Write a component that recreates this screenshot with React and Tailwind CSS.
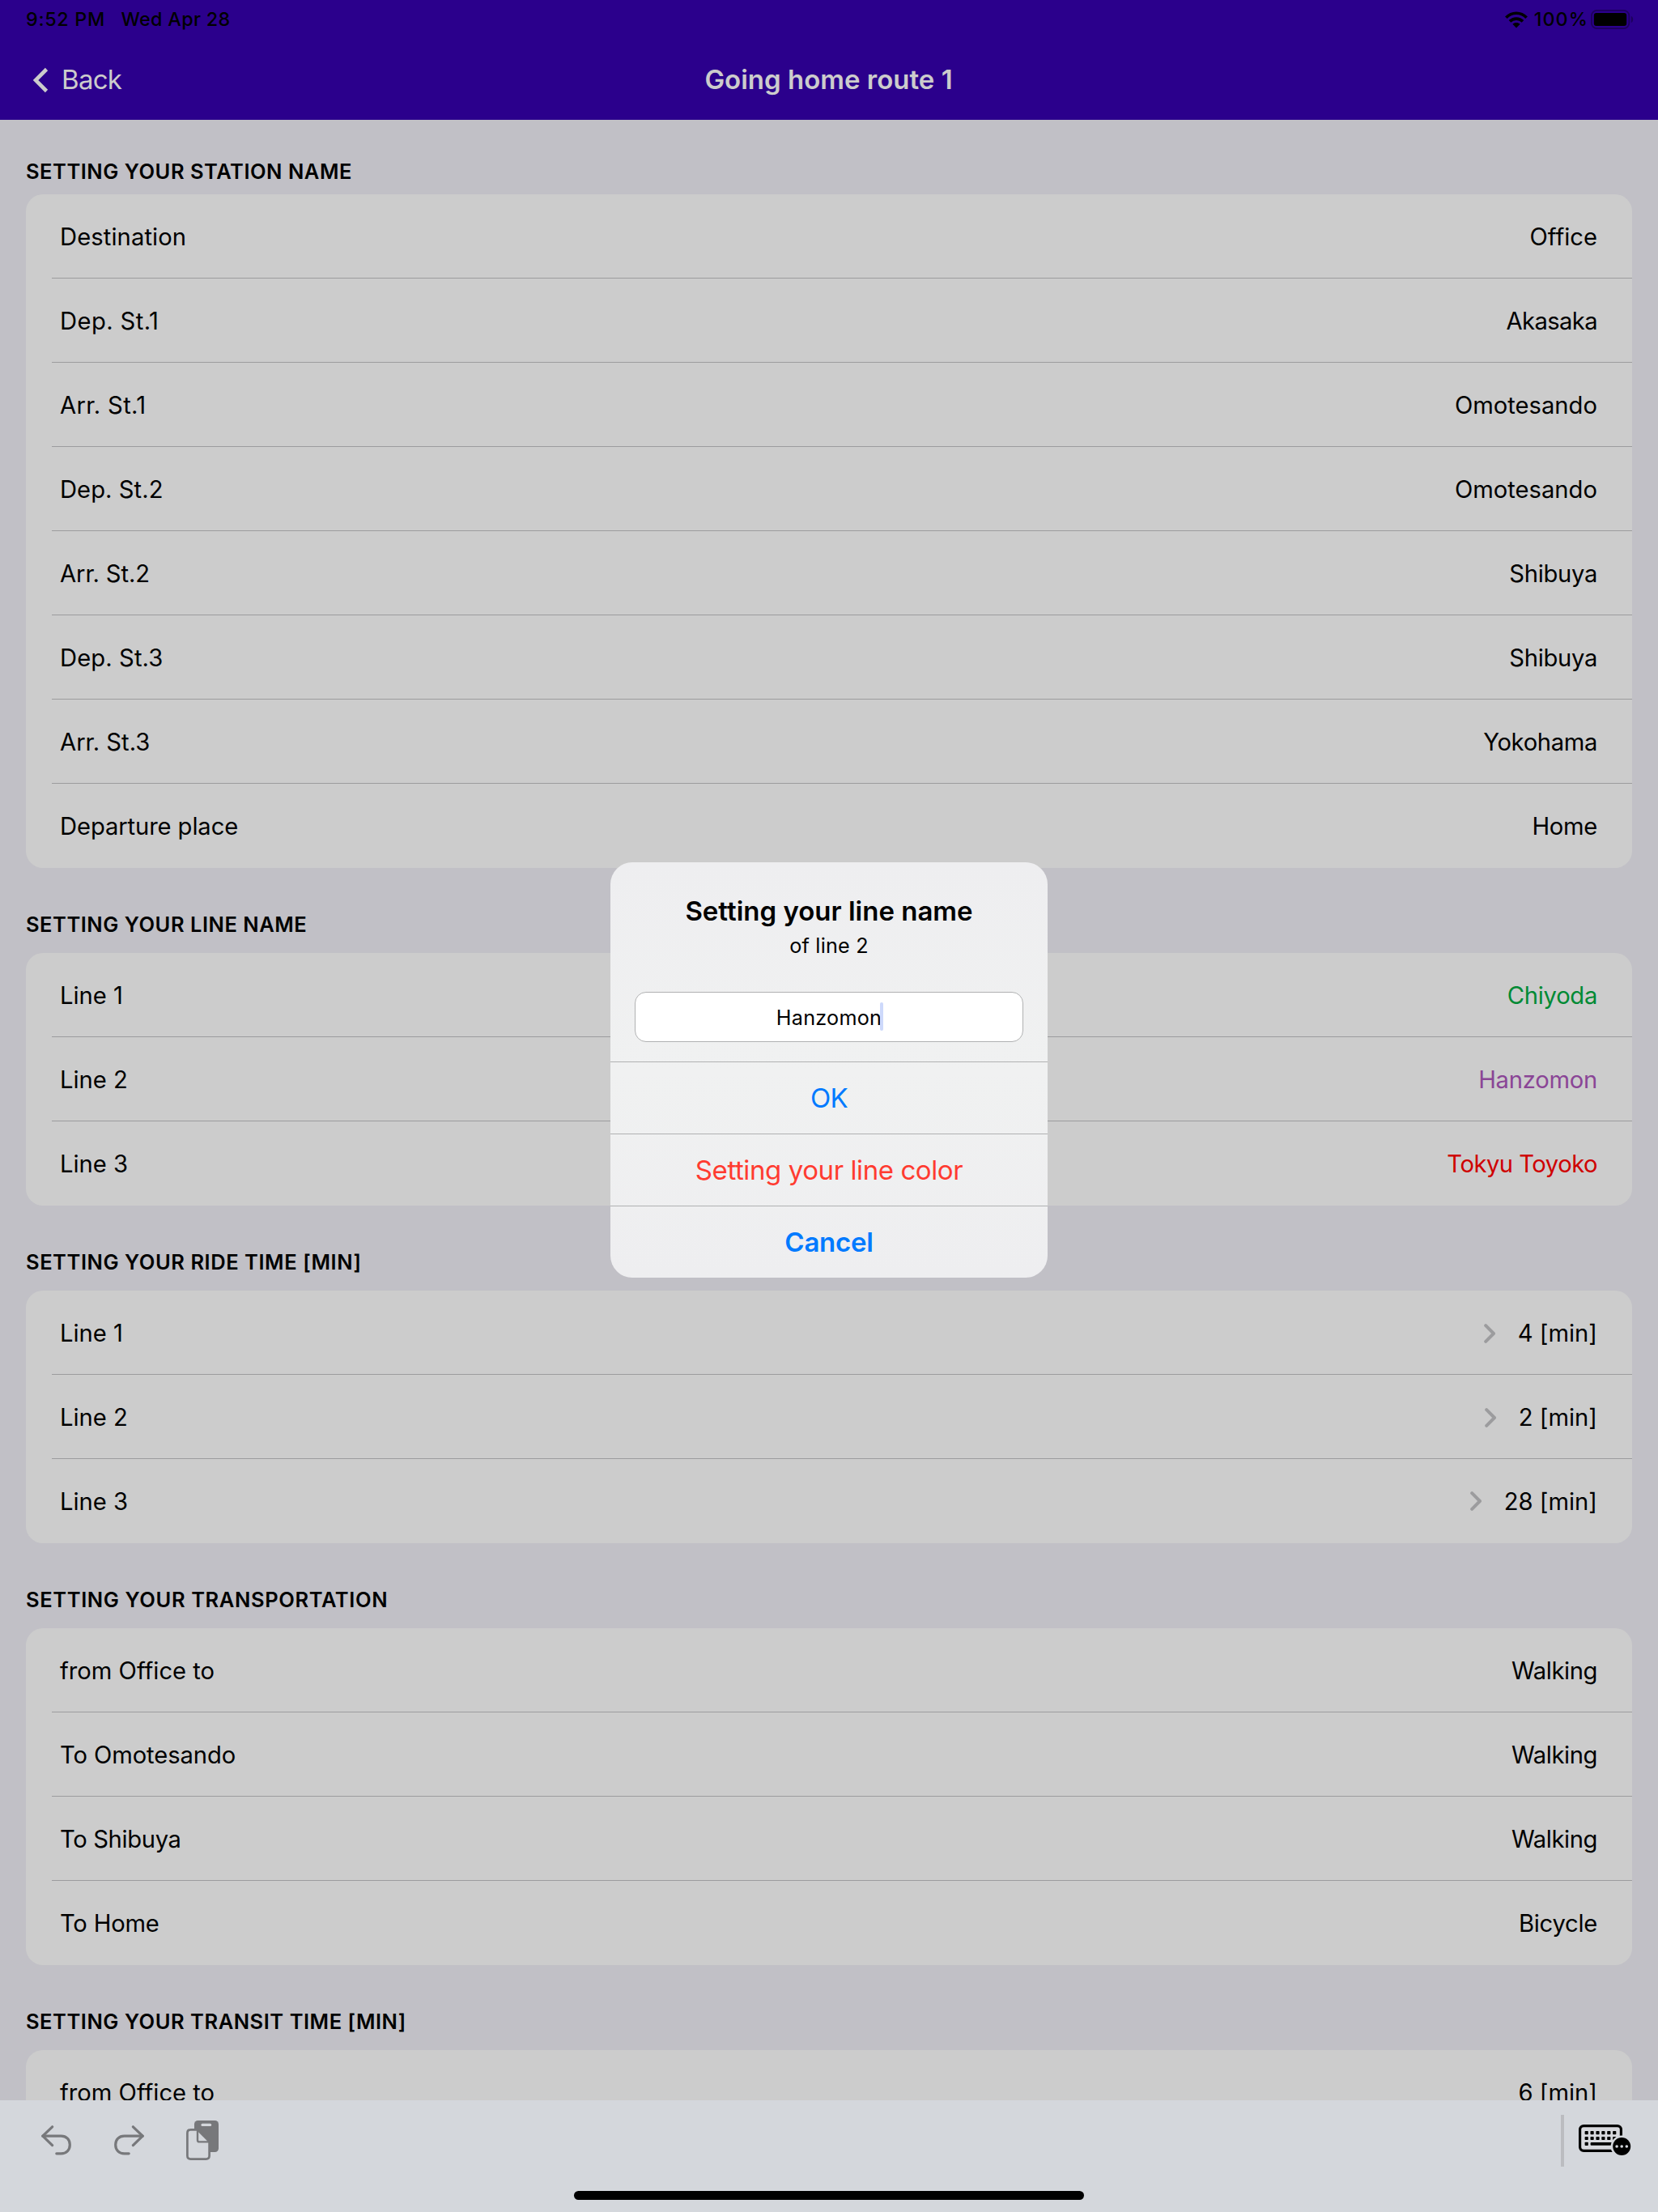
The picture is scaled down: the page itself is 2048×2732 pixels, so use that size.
import React from "react";

const sections = [
  {
    title: "Setting your station name",
    spacing: "tracking-[0.52px]",
    rows: [
      { label: "Destination", value: "Office", ls: "tracking-[0.1px]" },
      { label: "Dep. St.1", value: "Akasaka", ls: "tracking-[0.4px]", vls: "tracking-[-0.6px]" },
      { label: "Arr. St.1", value: "Omotesando", ls: "tracking-[0.35px]" },
      { label: "Dep. St.2", value: "Omotesando", ls: "tracking-[0.05px]" },
      { label: "Arr. St.2", value: "Shibuya", ls: "tracking-[-0.1px]", vls: "tracking-[-0.3px]" },
      { label: "Dep. St.3", value: "Shibuya", ls: "tracking-[0.1px]", vls: "tracking-[-0.3px]" },
      { label: "Arr. St.3", value: "Yokohama", ls: "tracking-[0px]", vls: "tracking-[-0.35px]" },
      { label: "Departure place", value: "Home", ls: "tracking-[-0.1px]", vls: "tracking-[-0.3px]" },
    ],
  },
  {
    title: "Setting your line name",
    spacing: "tracking-[0.52px]",
    rows: [
      { label: "Line 1", value: "Chiyoda", color: "text-[#008a34]", vls: "tracking-[-0.3px]" },
      { label: "Line 2", value: "Hanzomon", color: "text-[#8a4596]", vls: "tracking-[-0.25px]" },
      { label: "Line 3", value: "Tokyu Toyoko", color: "text-[#cf0000]", vls: "tracking-[-0.5px]" },
    ],
  },
  {
    title: "Setting your ride time [min]",
    spacing: "tracking-[0.55px]",
    rows: [
      { label: "Line 1", value: "4 [min]", chevron: true },
      { label: "Line 2", value: "2 [min]", chevron: true },
      { label: "Line 3", value: "28 [min]", chevron: true },
    ],
  },
  {
    title: "Setting your transportation",
    spacing: "tracking-[0.61px]",
    rows: [
      { label: "from Office to", value: "Walking", vls: "tracking-[-0.42px]" },
      { label: "To Omotesando", value: "Walking", ls: "tracking-[-0.1px]", vls: "tracking-[-0.42px]" },
      { label: "To Shibuya", value: "Walking", ls: "tracking-[-0.35px]", vls: "tracking-[-0.42px]" },
      { label: "To Home", value: "Bicycle", ls: "tracking-[-0.2px]", vls: "tracking-[-0.25px]" },
    ],
  },
  {
    title: "Setting your transit time [min]",
    spacing: "tracking-[0.53px]",
    rows: [{ label: "from Office to", value: "6 [min]" }],
  },
];

function StatusBar() {
  return (
    <div className="flex h-12 items-center pl-8 pr-[30px] text-[23.3px] font-medium text-black">
      <span className="tracking-[0.72px]">9:52 PM</span>
      <span className="ml-[19.5px] tracking-[0.34px]">Wed Apr 28</span>
      <svg className="ml-auto" width="28" height="21" viewBox="0 0 28 21">
        <g fill="none" stroke="#000" strokeWidth="3.7">
          <path d="M1.4 7.7C8.3 0.4 19.7 0.4 26.6 7.7" />
          <path d="M6 12.4C10.4 7.9 17.6 7.9 22 12.4" />
        </g>
        <path d="M9.4 15.8C12 13.4 16 13.4 18.6 15.8L14 20.5Z" />
      </svg>
      <span className="ml-2 tracking-[1.1px]">100%</span>
      <svg className="ml-[3px]" width="53" height="24" viewBox="0 0 53 24">
        <rect x="0.9" y="0.9" width="46.4" height="22.2" rx="6.5" fill="none" stroke="#1d005c" strokeWidth="1.8" />
        <rect x="3.8" y="4" width="40.4" height="16" rx="3" />
        <path d="M49.8 8C53 9 53 15 49.8 16Z" fill="#1d005c" />
      </svg>
    </div>
  );
}

function NavBar() {
  return (
    <div className="grid h-[100px] grid-cols-3 items-center text-[33px] text-[#cccccc]">
      <div className="flex items-center pl-10">
        <svg className="mt-0.5" width="20" height="32" viewBox="0 0 20 32">
          <path d="M17.5 2.5L4 16L17.5 29.5" fill="none" stroke="currentColor" strokeWidth="4.6" />
        </svg>
        <span className="ml-4 pt-0.5 tracking-[-0.7px]">Back</span>
      </div>
      <h1 className="pr-px pt-0.5 text-center font-semibold">Going home route 1</h1>
    </div>
  );
}

function Row({ row, last }) {
  const nudge = last ? "pt-px" : "pt-[3px]";
  return (
    <div className="h-[104px] pl-8">
      <div
        className={`flex h-full items-center justify-between pl-[10px] pr-[43px] ${last ? "" : "border-b border-[#9c9c9e]"}`}
      >
        <span className={`${nudge} ${row.ls || ""}`}>{row.label}</span>
        <span className={`flex items-center ${nudge} ${row.color || ""} ${row.vls || ""}`}>
          {row.chevron && (
            <svg className="mr-[27px]" width="15" height="24" viewBox="0 0 15 24">
              <path
                d="M2.2 2.2L12 12L2.2 21.8"
                fill="none"
                stroke="#9c9c9e"
                strokeWidth="4"
                strokeLinecap="round"
                strokeLinejoin="round"
              />
            </svg>
          )}
          {row.value}
        </span>
      </div>
    </div>
  );
}

function Section({ section, first }) {
  return (
    <section className="shrink-0">
      <h2
        className={`h-[42px] text-[25.5px] leading-[42px] font-semibold uppercase ${section.spacing} ${
          first ? "mt-[43px] mb-[7px]" : "mt-[49px] mb-[14px]"
        }`}
      >
        {section.title}
      </h2>
      <div className="rounded-[21px] bg-[#cccccc] text-[29.2px]">
        {section.rows.map((row, i) => (
          <Row key={i} row={row} last={i === section.rows.length - 1} />
        ))}
      </div>
    </section>
  );
}

function LineNameDialog() {
  const button = "flex h-[89px] w-full items-center justify-center border-t border-[#b0b1b2] pt-0.5 text-[33px]";
  return (
    <div className="absolute left-[754px] top-[1065px] w-[540px] overflow-hidden rounded-[27px] bg-linear-to-b from-[#eeeef0] via-[#f0f1f1] to-[#eeeef0]">
      <div className="flex h-[246px] flex-col items-center px-[30px] text-black">
        <h3 className="mt-[38px] h-11 text-[33px] leading-[44px] font-semibold">Setting your line name</h3>
        <p className="mt-[3px] h-9 text-[25.2px] leading-9 tracking-[0.2px]">of line 2</p>
        <div className="mt-[39px] flex h-[62px] w-full items-center justify-center rounded-[14px] border border-[#b0b1b2] bg-white pt-1 text-[25.2px]">
          <span className="relative tracking-[0.25px]">
            Hanzomon
            <span className="absolute -right-[2px] -top-px h-[35px] w-1 rounded-full bg-[#cdd9fb]" />
          </span>
        </div>
      </div>
      <button className={`${button} tracking-[-0.8px] text-[#007aff]`}>OK</button>
      <button className={`${button} tracking-[-0.42px] text-[#ff3b30]`}>Setting your line color</button>
      <button className={`${button} tracking-[-0.25px] font-semibold text-[#007aff]`}>Cancel</button>
    </div>
  );
}

function UndoIcon({ flipped }) {
  return (
    <svg width="37" height="37" viewBox="0 0 37 37" className={flipped ? "-scale-x-100" : ""}>
      <g fill="none" stroke="#77787b" strokeWidth="3.2" strokeLinecap="round" strokeLinejoin="round">
        <path d="M13.6 1.8L1.8 13.2L13.6 24.6" />
        <path d="M1.8 13.2H24.5C31 13.2 35.3 17.6 35.3 24S31 34.8 24.5 34.8H18.8" />
      </g>
    </svg>
  );
}

function PasteIcon() {
  return (
    <svg width="40" height="49" viewBox="0 0 40 49">
      <rect x="10" y="0" width="30" height="39" rx="4.5" fill="#77787b" />
      <rect x="18.4" y="3.8" width="12.8" height="3.2" rx="1.6" fill="#d4d7dc" />
      <path
        d="M5 11.4H14L28.6 26V43.6Q28.6 47.6 24.6 47.6H5.4Q1.4 47.6 1.4 43.6V15.4Q1.4 11.4 5.4 11.4Z"
        fill="#d4d7dc"
        stroke="#77787b"
        strokeWidth="2.7"
      />
      <path d="M14 11.4V24.2Q14 26.4 16.2 26.4H28.6" fill="none" stroke="#77787b" strokeWidth="2.4" />
    </svg>
  );
}

function KeyboardIcon() {
  const columns = [9.7, 16.6, 23.5, 30.4, 37.3, 44.2];
  return (
    <svg width="65" height="39" viewBox="0 0 65 39">
      <rect x="1.6" y="1.6" width="50.8" height="30.8" rx="4.6" fill="#d8d9de" stroke="#000" strokeWidth="3.2" />
      {columns.map((x) => (
        <g key={x}>
          <rect x={x - 2.1} y="8" width="4.2" height="4.2" rx="0.8" />
          <rect x={x - 2.1} y="14.9" width="4.2" height="4.2" rx="0.8" />
        </g>
      ))}
      <rect x="7.6" y="21.8" width="4.2" height="4.2" rx="0.8" />
      <rect x="14.6" y="22" width="27" height="3.8" rx="1" />
      <circle cx="53.2" cy="27" r="13.6" fill="#d4d7dc" />
      <circle cx="53.2" cy="27" r="11" />
      <circle cx="47.1" cy="27" r="1.8" fill="#d4d7dc" />
      <circle cx="53.2" cy="27" r="1.8" fill="#d4d7dc" />
      <circle cx="59.3" cy="27" r="1.8" fill="#d4d7dc" />
    </svg>
  );
}

function KeyboardToolbar() {
  return (
    <footer className="flex h-[138px] shrink-0 flex-col items-center bg-[#d4d7dc]">
      <div className="mt-[18px] flex h-16 w-full items-center pl-[51px] pr-[33px]">
        <div className="-mt-0.5 flex items-center">
          <UndoIcon />
          <div className="ml-[53px]">
            <UndoIcon flipped />
          </div>
          <div className="ml-[52px]">
            <PasteIcon />
          </div>
        </div>
        <div className="ml-auto h-16 w-1 bg-[#bbbcc0]" />
        <div className="-mt-0.5 ml-[18px]">
          <KeyboardIcon />
        </div>
      </div>
      <div className="mt-[30px] h-[11px] w-[630px] rounded-full bg-black" />
    </footer>
  );
}

export default function App() {
  return (
    <div className="relative flex h-[2732px] w-[2048px] flex-col overflow-hidden bg-[#c1c0c6] font-['Inter',sans-serif] text-black">
      <header className="shrink-0 bg-[#2b008c]">
        <StatusBar />
        <NavBar />
      </header>
      <main className="flex min-h-0 flex-1 flex-col overflow-hidden px-8">
        {sections.map((section, i) => (
          <Section key={section.title} section={section} first={i === 0} />
        ))}
      </main>
      <KeyboardToolbar />
      <LineNameDialog />
    </div>
  );
}
